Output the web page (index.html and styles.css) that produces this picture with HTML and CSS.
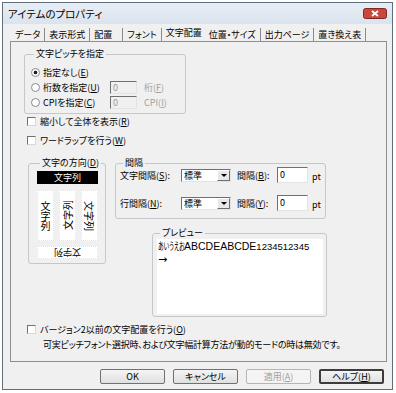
FILE: index.html
```html
<!DOCTYPE html>
<html lang="ja">
<head>
  <meta charset="UTF-8" />
  <title>アイテムのプロパティ</title>
  <link rel="stylesheet" href="styles.css">
</head>
<body>

  <div class="window">
    <div class="titlebar">
      <span class="title">アイテムのプロパティ</span>
      <span class="close">
        <svg width="24" height="11" viewBox="0 0 24 11">
          <rect x="0.5" y="0.5" width="23" height="10" rx="2" fill="#c9473d" stroke="#7d2a22" />
          <path d="M9 3 L15 8 M15 3 L9 8" stroke="#fff" stroke-width="1.8" />
        </svg>
      </span>
    </div>

    <div class="client">
      <!-- Tabs -->
      <div class="tabs">
        <span class="tab">データ</span>
        <span class="tab">表示形式</span>
        <span class="tab wide">配置</span>
        <span class="tab">フォント</span>
        <span class="tab current">文字配置</span>
        <span class="tab">位置・サイズ</span>
        <span class="tab">出力ページ</span>
        <span class="tab">置き換え表</span>
      </div>

      <div class="panel">
        <!-- Character pitch -->
        <div class="group pitch">
          <span class="group-title">文字ピッチを指定</span>
          <div class="row"><span class="radio on"></span>指定なし(<u>E</u>)</div>
          <div class="row">
            <span class="radio"></span><span class="lbl">桁数を指定(<u>U</u>)</span>
            <span class="field off">0</span><span class="dim">桁(<u>F</u>)</span>
          </div>
          <div class="row">
            <span class="radio"></span><span class="lbl">CPIを指定(<u>C</u>)</span>
            <span class="field off">0</span><span class="dim">CPI(<u>I</u>)</span>
          </div>
        </div>

        <div class="check-row"><span class="box"></span>縮小して全体を表示(<u>R</u>)</div>
        <div class="check-row second"><span class="box"></span>ワードラップを行う(<u>W</u>)</div>

        <div class="lower">
          <!-- Direction -->
          <div class="group direction">
            <span class="group-title">文字の方向(<u>D</u>)</span>
            <div class="dir-box selected">文字列</div>
            <div class="dir-cols">
              <div class="dir-col upright">文字列</div>
              <div class="dir-col sideways up">文字列</div>
              <div class="dir-col sideways">文字列</div>
            </div>
            <div class="dir-box"><span class="rot-flip">文字列</span></div>
          </div>

          <div class="right">
            <!-- Spacing -->
            <div class="group spacing">
              <span class="group-title">間隔</span>
              <div class="sp-row first">
                <span class="sp-lbl">文字間隔(<u>S</u>):</span>
                <span class="combo">標準<span class="arrow"></span></span>
                <span class="sp-lbl2">間隔(<u>B</u>):</span>
                <span class="field on">0</span>
                <span class="unit">pt</span>
              </div>
              <div class="sp-row">
                <span class="sp-lbl">行間隔(<u>N</u>):</span>
                <span class="combo">標準<span class="arrow"></span></span>
                <span class="sp-lbl2">間隔(<u>Y</u>):</span>
                <span class="field on">0</span>
                <span class="unit">pt</span>
              </div>
            </div>

            <!-- Preview -->
            <div class="group preview">
              <span class="group-title">プレビュー</span>
              <div class="preview-area"><span class="narrow"><span>あいうえお</span></span>ABCDEABCDE<span class="small">1234512345</span><br /><span class="arrow-glyph">→</span></div>
            </div>
          </div>
        </div>

        <div class="check-row legacy"><span class="box"></span>バージョン2以前の文字配置を行う(<u>O</u>)</div>
        <div class="note">可実ピッチフォント選択時、および文字幅計算方法が動的モードの時は無効です。</div>
      </div>

      <div class="buttons">
        <span class="btn">OK</span>
        <span class="btn">キャンセル</span>
        <span class="btn disabled">適用(<u>A</u>)</span>
        <span class="btn default">ヘルプ(<u>H</u>)</span>
      </div>
    </div>
  </div>

</body>
</html>
```

FILE: styles.css
```css
* {
  box-sizing: border-box;
}
body {
  margin: 0;
  background: #fff;
  font-family: "Noto Sans CJK JP", sans-serif;
  font-size: 9px;
  font-feature-settings: "palt";
  color: #000;
}
u {
  text-underline-offset: 1px;
}

.window {
  width: 391px;
  height: 388px;
  margin: 2px 0 0 2px;
  border: 1px solid #5f6c79;
  background: #f0f0f0;
  display: flex;
  flex-direction: column;
}
.titlebar {
  flex: none;
  height: 21px;
  display: flex;
  align-items: center;
  justify-content: space-between;
  padding: 0 5px 0 5px;
  background: linear-gradient(#e8eef5, #dae3ee);
}
.title {
  font-size: 10.5px;
}
.close {
  display: flex;
}
.client {
  flex: 1;
  padding: 2px 5px 0 7px;
}

/* tabs */
.tabs {
  display: flex;
  align-items: flex-end;
  height: 15px;
  padding-left: 1px;
}
.tab {
  flex: none;
  white-space: nowrap;
  height: 13px;
  line-height: 13px;
  padding: 0 4px;
  border-right: 1px solid #8a8a8a;
}
.tab.wide {
  padding-right: 10px;
}
.tab.current {
  height: 15px;
  line-height: 13px;
  padding: 0 3px 0 4px;
  border-right: none;
}
.panel {
  height: 321px;
  border: 1px solid #8e8f8f;
}

/* group boxes */
.group {
  border: 1px solid #c4c8cc;
  border-radius: 3px;
}
.group-title {
  display: block;
  width: max-content;
  height: 12px;
  line-height: 12px;
  margin: -7px 0 0 3px;
  padding: 0 2px;
  background: #f0f0f0;
}

.pitch {
  width: 162px;
  height: 60px;
  margin: 12px 0 0 13px;
  padding: 0 0 0 6px;
}
.pitch .row:first-of-type {
  margin-top: 5px;
}
.row {
  display: flex;
  align-items: center;
  height: 15px;
  white-space: nowrap;
}
.radio {
  width: 9px;
  height: 9px;
  margin-right: 3px;
  border: 1px solid #8a8a8a;
  border-radius: 50%;
  background: #fff;
}
.radio.on {
  background: radial-gradient(circle, #222 0 1.6px, #fff 2.2px);
}
.lbl {
  width: 67px;
}
.field {
  height: 13px;
  line-height: 11px;
  padding-left: 2px;
  border: 1px solid;
  border-color: #6f6f6f #e3e3e3 #e3e3e3 #6f6f6f;
}
.field.off {
  width: 27px;
  background: #f0f0f0;
  color: #9a9a9a;
}
.dim {
  margin-left: 7px;
  color: #a0a0a0;
}

.check-row {
  display: flex;
  align-items: center;
  height: 14px;
  margin-left: 16px;
  white-space: nowrap;
}
.check-row.second {
  margin-top: 5px;
}
.box {
  width: 9px;
  height: 9px;
  margin-right: 4px;
  border: 1px solid;
  border-color: #707070 #d8d8d8 #d8d8d8 #707070;
  background: #fff;
}

.lower {
  display: flex;
  align-items: flex-start;
  margin: 16px 0 0 17px;
}

/* direction */
.direction {
  width: 78px;
  height: 101px;
  padding-left: 8px;
}
.dir-box {
  width: 61px;
  height: 13px;
  line-height: 11px;
  margin-top: 5px;
  text-align: center;
  background: #fff;
  border: 1px dotted #e2e2e2;
}
.dir-box.selected {
  margin-top: 2px;
  background: #000;
  border-color: #000;
  color: #fff;
}
.dir-cols {
  display: flex;
  gap: 5px;
  margin-top: 6px;
}
.dir-col {
  width: 17px;
  height: 51px;
  display: flex;
  align-items: center;
  justify-content: center;
  writing-mode: vertical-rl;
  font-size: 10px;
  background: #fff;
  border: 1px dotted #e2e2e2;
}
.dir-col.upright {
  text-orientation: upright;
}
.dir-col.sideways {
  text-orientation: sideways;
}
.dir-col.up {
  transform: rotate(180deg);
}
.rot-flip {
  display: inline-block;
  transform: rotate(180deg);
}

/* spacing */
.right {
  margin-left: 9px;
}
.spacing {
  width: 211px;
  height: 56px;
  padding-left: 4px;
}
.sp-row {
  display: flex;
  align-items: center;
  height: 16px;
  margin-top: 12px;
  white-space: nowrap;
}
.sp-row.first {
  margin-top: -2px;
}
.sp-lbl {
  width: 61px;
}
.sp-lbl2 {
  width: 40px;
  margin-left: 6px;
}
.combo {
  width: 50px;
  height: 13px;
  display: flex;
  align-items: center;
  justify-content: space-between;
  padding-left: 2px;
  border: 1px solid;
  border-color: #6f6f6f #e3e3e3 #e3e3e3 #6f6f6f;
  background: #fff;
}
.arrow {
  width: 13px;
  height: 11px;
  border: 1px solid;
  border-color: #fff #6f6f6f #6f6f6f #fff;
  background: #e8e8e8;
}
.arrow::after {
  content: "";
  display: block;
  width: 0;
  height: 0;
  margin: 3px auto 0;
  border-left: 3px solid transparent;
  border-right: 3px solid transparent;
  border-top: 3px solid #000;
}
.field.on {
  width: 31px;
  height: 16px;
  line-height: 13px;
  background: #fff;
}
.unit {
  align-self: flex-end;
  margin-left: 4px;
  line-height: 12px;
}

/* preview */
.preview {
  width: 175px;
  height: 84px;
  margin: 14px 0 0 37px;
  padding: 0 3px 1px 4px;
}
.preview-area {
  height: 75px;
  padding: 1px 0 0 1px;
  line-height: 12px;
  white-space: nowrap;
  overflow: hidden;
  font-size: 10.5px;
  font-family: "Liberation Sans", "Noto Sans CJK JP", sans-serif;
  background: #fff;
}
.narrow {
  display: inline-block;
  width: 26px;
  vertical-align: top;
}
.narrow span {
  display: inline-block;
  transform: scaleX(0.55);
  transform-origin: left center;
  font-family: "Noto Sans CJK JP", sans-serif;
}
.small {
  font-size: 9.5px;
}
.arrow-glyph {
  font-family: "DejaVu Sans", sans-serif;
  font-size: 11px;
}

.check-row.legacy {
  margin-top: 5px;
}
.note {
  height: 14px;
  line-height: 14px;
  margin: 2px 0 0 32px;
  letter-spacing: -0.25px;
  white-space: nowrap;
}

/* buttons */
.buttons {
  display: flex;
  justify-content: flex-end;
  gap: 8px;
  margin-top: 7px;
  padding-right: 3px;
}
.btn {
  width: 65px;
  height: 15px;
  line-height: 13px;
  text-align: center;
  border: 1px solid #707070;
  border-radius: 2px;
  background: linear-gradient(#f4f4f4, #e0e0e0);
}
.btn.disabled {
  color: #a0a0a0;
  border-color: #b5b5b5;
  background: #f4f4f4;
}
.btn.default {
  border: 2px solid #3c3c3c;
  line-height: 11px;
}
```
